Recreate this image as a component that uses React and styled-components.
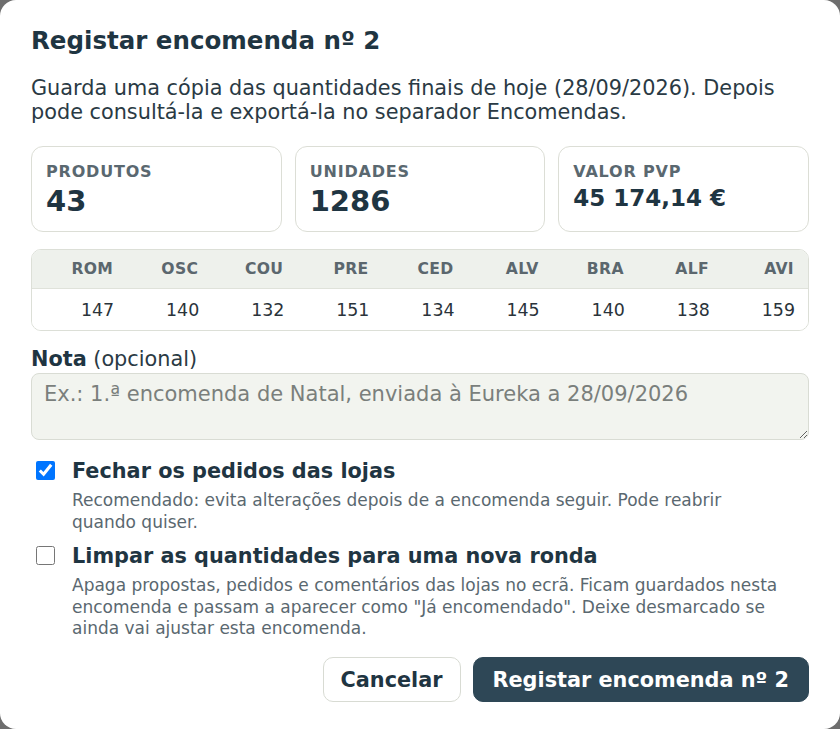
import styled, { createGlobalStyle } from "styled-components";

const GlobalStyle = createGlobalStyle`
    html, body {
        margin: 0;
        padding: 0;
        background: #6e6e6e;
    }
    * {
        box-sizing: border-box;
    }
    body {
        font-family: "DejaVu Sans", "Noto Sans", sans-serif;
    }
`;

const Dialog = styled.section`
    width: 840px;
    height: 729px;
    background: #fff;
    border-radius: 16px;
    padding: 26px 31px 27px;
    display: flex;
    flex-direction: column;
    color: #22343f;
`;

const Title = styled.h2`
    margin: 0;
    font-size: 24.5px;
    line-height: 30px;
    font-weight: 700;
    color: #1f3542;
`;

const Lead = styled.p`
    margin: 21px 0 0;
    font-size: 20.8px;
    line-height: 23.5px;
    color: #2a3a44;
`;

const StatGrid = styled.div`
    display: grid;
    grid-template-columns: repeat(3, 1fr);
    gap: 13px;
    margin-top: 22px;
`;

const StatCard = styled.div`
    height: 86px;
    border: 1px solid #dcded6;
    border-radius: 12px;
    padding: 15px 14px;
`;

const StatLabel = styled.div`
    font-size: 16px;
    line-height: 20px;
    font-weight: 700;
    letter-spacing: 0.05em;
    text-transform: uppercase;
    color: #5a6870;
`;

const StatValue = styled.div`
    margin-top: 2px;
    font-size: ${(p) => (p.$small ? "23px" : "29px")};
    line-height: ${(p) => (p.$small ? "28px" : "34px")};
    font-weight: 700;
    color: #1f3542;
`;

const Table = styled.div`
    margin-top: 17px;
    border: 1px solid #dcdfd7;
    border-radius: 10px;
    overflow: hidden;
`;

const Row = styled.div`
    display: grid;
    grid-template-columns: repeat(9, 1fr);
    padding-left: 10px;
    height: ${(p) => (p.$head ? "39px" : "41px")};
    align-items: center;
    background: ${(p) => (p.$head ? "#eef1ec" : "#fff")};
    border-bottom: ${(p) => (p.$head ? "1px solid #dfe2da" : "none")};
`;

const HeadCell = styled.div`
    text-align: right;
    padding-right: 14px;
    font-size: 15.6px;
    font-weight: 700;
    letter-spacing: 0.02em;
    color: #5b676e;
`;

const Cell = styled.div`
    text-align: right;
    padding-right: 13px;
    font-size: 17.4px;
    color: #2a333a;
`;

const NoteLabel = styled.label`
    margin-top: 16px;
    font-size: 20.8px;
    line-height: 24px;
    color: #2a3a44;

    strong {
        color: #1f3542;
    }
`;

const NoteInput = styled.textarea`
    margin-top: 2px;
    height: 67px;
    width: 100%;
    resize: vertical;
    background: #f2f4ef;
    border: 1px solid #d9dcd4;
    border-radius: 8px;
    padding: 7px 12px;
    font-family: inherit;
    font-size: 21px;
    line-height: 26px;
    color: #2a3a44;

    &::placeholder {
        color: #7a7f7c;
    }
`;

const Options = styled.div`
    margin-top: 19px;
    display: flex;
    flex-direction: column;
    gap: 11px;
`;

const Option = styled.label`
    display: grid;
    grid-template-columns: 20px 1fr;
    column-gap: 21px;
    align-items: start;
    padding-right: 20px;
`;

const Check = styled.input`
    width: 19px;
    height: 19px;
    margin: 2px 0 0 5px;
`;

const OptionTitle = styled.div`
    font-size: 20.8px;
    line-height: 24px;
    font-weight: 700;
    color: #1f3542;
`;

const OptionText = styled.div`
    margin-top: 7px;
    font-size: 17px;
    line-height: 21.5px;
    color: #5a6870;
`;

const Footer = styled.div`
    margin-top: auto;
    display: flex;
    justify-content: flex-end;
    gap: 12px;
`;

const Button = styled.button`
    height: 45px;
    border-radius: 10px;
    font-family: inherit;
    font-size: 20.8px;
    font-weight: 700;
    cursor: pointer;
    border: 1px solid ${(p) => (p.$primary ? "#2e4756" : "#d8dbd3")};
    background: ${(p) => (p.$primary ? "#2e4756" : "#fff")};
    color: ${(p) => (p.$primary ? "#fff" : "#1f3542")};
    padding: ${(p) => (p.$primary ? "0 19px" : "0 17px")};
`;

const stores = [
    ["ROM", 147],
    ["OSC", 140],
    ["COU", 132],
    ["PRE", 151],
    ["CED", 134],
    ["ALV", 145],
    ["BRA", 140],
    ["ALF", 138],
    ["AVI", 159],
];

const App = () => {
    return (
        <>
            <GlobalStyle />
            <Dialog>
                <Title>Registar encomenda nº 2</Title>
                <Lead>
                    Guarda uma cópia das quantidades finais de hoje (28/09/2026). Depois pode
                    consultá-la e exportá-la no separador Encomendas.
                </Lead>
                <StatGrid>
                    <StatCard>
                        <StatLabel>Produtos</StatLabel>
                        <StatValue>43</StatValue>
                    </StatCard>
                    <StatCard>
                        <StatLabel>Unidades</StatLabel>
                        <StatValue>1286</StatValue>
                    </StatCard>
                    <StatCard>
                        <StatLabel>Valor PVP</StatLabel>
                        <StatValue $small>45 174,14 €</StatValue>
                    </StatCard>
                </StatGrid>
                <Table>
                    <Row $head>
                        {stores.map(([code]) => (
                            <HeadCell key={code}>{code}</HeadCell>
                        ))}
                    </Row>
                    <Row>
                        {stores.map(([code, qty]) => (
                            <Cell key={code}>{qty}</Cell>
                        ))}
                    </Row>
                </Table>
                <NoteLabel htmlFor="nota">
                    <strong>Nota</strong> (opcional)
                </NoteLabel>
                <NoteInput
                    id="nota"
                    placeholder="Ex.: 1.ª encomenda de Natal, enviada à Eureka a 28/09/2026"
                />
                <Options>
                    <Option>
                        <Check type="checkbox" defaultChecked />
                        <div>
                            <OptionTitle>Fechar os pedidos das lojas</OptionTitle>
                            <OptionText>
                                Recomendado: evita alterações depois de a encomenda seguir. Pode
                                reabrir quando quiser.
                            </OptionText>
                        </div>
                    </Option>
                    <Option>
                        <Check type="checkbox" />
                        <div>
                            <OptionTitle>Limpar as quantidades para uma nova ronda</OptionTitle>
                            <OptionText>
                                Apaga propostas, pedidos e comentários das lojas no ecrã. Ficam
                                guardados nesta encomenda e passam a aparecer como "Já encomendado".
                                Deixe desmarcado se ainda vai ajustar esta encomenda.
                            </OptionText>
                        </div>
                    </Option>
                </Options>
                <Footer>
                    <Button>Cancelar</Button>
                    <Button $primary>Registar encomenda nº 2</Button>
                </Footer>
            </Dialog>
        </>
    );
};

export default App;
